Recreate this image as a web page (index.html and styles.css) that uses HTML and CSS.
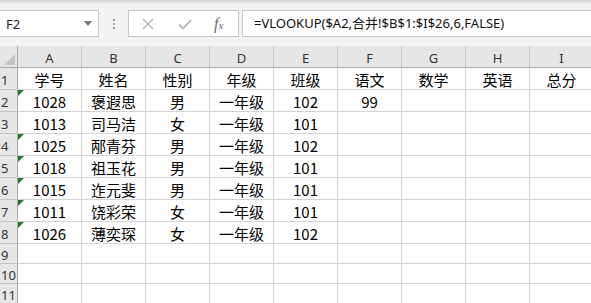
FILE: index.html
```html
<!DOCTYPE html>
<html>
	<head>
		<meta charset="utf-8">
		<title>VLOOKUP</title>
		<link rel="stylesheet" href="styles.css">
	</head>
	<body>
		<div id="bar">
			<div class="namebox">
				<span>F2</span>
				<i class="drop"></i>
			</div>
			<div class="grip"><b></b><b></b><b></b></div>
			<div class="btns">
				<svg class="ico" width="12" height="12" viewBox="0 0 12 12"><path d="M1 1L11 11M11 1L1 11" stroke="#b4b4b4" stroke-width="1.4" fill="none"/></svg>
				<svg class="ico" width="14" height="12" viewBox="0 0 14 12"><path d="M1 6.5L5 10.5L13 2" stroke="#b4b4b4" stroke-width="1.8" fill="none"/></svg>
				<span class="fx">f<small>x</small></span>
			</div>
			<div class="formula">=VLOOKUP($A2,合并!$B$1:$I$26,6,FALSE)</div>
		</div>

		<div id="sheet">
			<!-- 列标 -->
			<div class="corner"></div>
			<div class="ch">A</div><div class="ch">B</div><div class="ch">C</div><div class="ch">D</div><div class="ch">E</div><div class="ch">F</div><div class="ch">G</div><div class="ch">H</div><div class="ch">I</div>

			<div class="rh">1</div>
			<div class="c">学号</div><div class="c">姓名</div><div class="c">性别</div><div class="c">年级</div><div class="c">班级</div><div class="c">语文</div><div class="c">数学</div><div class="c">英语</div><div class="c">总分</div>

			<div class="rh">2</div>
			<div class="c tri">1028</div><div class="c">褒遐思</div><div class="c">男</div><div class="c">一年级</div><div class="c">102</div><div class="c">99</div><div class="c"></div><div class="c"></div><div class="c"></div>

			<div class="rh">3</div>
			<div class="c">1013</div><div class="c">司马洁</div><div class="c">女</div><div class="c">一年级</div><div class="c">101</div><div class="c"></div><div class="c"></div><div class="c"></div><div class="c"></div>

			<div class="rh">4</div>
			<div class="c tri">1025</div><div class="c">邴青芬</div><div class="c">男</div><div class="c">一年级</div><div class="c">102</div><div class="c"></div><div class="c"></div><div class="c"></div><div class="c"></div>

			<div class="rh">5</div>
			<div class="c tri">1018</div><div class="c">祖玉花</div><div class="c">男</div><div class="c">一年级</div><div class="c">101</div><div class="c"></div><div class="c"></div><div class="c"></div><div class="c"></div>

			<div class="rh">6</div>
			<div class="c tri">1015</div><div class="c">迮元斐</div><div class="c">男</div><div class="c">一年级</div><div class="c">101</div><div class="c"></div><div class="c"></div><div class="c"></div><div class="c"></div>

			<div class="rh">7</div>
			<div class="c tri">1011</div><div class="c">饶彩荣</div><div class="c">女</div><div class="c">一年级</div><div class="c">101</div><div class="c"></div><div class="c"></div><div class="c"></div><div class="c"></div>

			<div class="rh">8</div>
			<div class="c tri">1026</div><div class="c">薄奕琛</div><div class="c">女</div><div class="c">一年级</div><div class="c">102</div><div class="c"></div><div class="c"></div><div class="c"></div><div class="c"></div>

			<div class="rh">9</div>
			<div class="c"></div><div class="c"></div><div class="c"></div><div class="c"></div><div class="c"></div><div class="c"></div><div class="c"></div><div class="c"></div><div class="c"></div>

			<div class="rh">10</div>
			<div class="c"></div><div class="c"></div><div class="c"></div><div class="c"></div><div class="c"></div><div class="c"></div><div class="c"></div><div class="c"></div><div class="c"></div>

			<div class="rh">11</div>
			<div class="c"></div><div class="c"></div><div class="c"></div><div class="c"></div><div class="c"></div><div class="c"></div><div class="c"></div><div class="c"></div><div class="c"></div>
		</div>
	</body>
</html>
```

FILE: styles.css
```css
html,body{
	margin: 0;
	padding: 0;
}
body{
	width: 591px;
	height: 303px;
	overflow: hidden;
	background-color: #fff;
	font-family: "Noto Sans", "Noto Sans CJK SC", sans-serif;
}
#bar{
	height: 46px;
	box-sizing: border-box;
	padding-top: 10px;
	display: flex;
	align-items: flex-start;
	background: linear-gradient(#d6d6d6 0, #e6e6e6 3px, #f3f3f3 4px);
}
.namebox{
	width: 100px;
	height: 27px;
	box-sizing: border-box;
	margin-left: -1px;
	border: 1px solid #c8c8c8;
	background-color: #fff;
	display: flex;
	align-items: center;
	justify-content: space-between;
	padding: 0 6px 0 6px;
	font-size: 13px;
	color: #222;
}
.drop{
	width: 0;
	height: 0;
	border-left: 4px solid transparent;
	border-right: 4px solid transparent;
	border-top: 5px solid #7a7a7a;
}
.grip{
	width: 29px;
	height: 27px;
	display: flex;
	flex-direction: column;
	align-items: center;
	justify-content: center;
	gap: 2px;
}
.grip b{
	width: 2px;
	height: 2px;
	background-color: #a8a8a8;
}
.btns{
	width: 111px;
	height: 27px;
	box-sizing: border-box;
	border: 1px solid #c8c8c8;
	background-color: #fff;
	display: flex;
	align-items: center;
	padding-left: 13px;
}
.btns .ico:nth-child(1){
	margin-right: 24px;
}
.btns .ico:nth-child(2){
	margin-right: 22px;
}
.fx{
	font-family: "Liberation Serif", serif;
	font-style: italic;
	font-size: 16px;
	color: #6f6a6f;
	line-height: 1;
}
.fx small{
	font-size: 11px;
}
.formula{
	flex: 1;
	height: 27px;
	box-sizing: border-box;
	margin-left: 3px;
	margin-right: -1px;
	border: 1px solid #c8c8c8;
	background-color: #fff;
	padding-left: 11px;
	font-size: 13px;
	line-height: 24px;
	color: #111;
	white-space: nowrap;
}
#sheet{
	display: grid;
	grid-template-columns: 18px repeat(9, 64px);
	grid-template-rows: repeat(9, 22px) repeat(3, 20px);
}
#sheet > div{
	box-sizing: border-box;
	border-right: 1px solid #d4d4d4;
	border-bottom: 1px solid #d4d4d4;
	display: flex;
	align-items: center;
	justify-content: center;
}
#sheet .corner{
	position: relative;
	background-color: #e6e6e6;
	border-right-color: #a9a9a9;
	border-bottom-color: #a9a9a9;
}
.corner::after{
	content: "";
	position: absolute;
	right: 2px;
	bottom: 2px;
	border-left: 11px solid transparent;
	border-bottom: 11px solid #c4c4c4;
}
#sheet .ch{
	background-color: #e6e6e6;
	border-right-color: #c4c4c4;
	border-bottom-color: #a9a9a9;
	font-size: 13px;
	color: #333;
	padding-top: 2px;
}
#sheet .rh{
	background-color: #e6e6e6;
	border-right-color: #a9a9a9;
	border-bottom-color: #c4c4c4;
	font-size: 13px;
	color: #333;
	justify-content: flex-start;
	padding: 2px 0 0 1px;
}
#sheet .c{
	position: relative;
	font-family: "Noto Sans CJK SC", sans-serif;
	font-size: 15px;
	color: #000;
	padding-top: 1px;
}
.c.tri::before{
	content: "";
	position: absolute;
	left: 0;
	top: 0;
	border-top: 6px solid #1d7a2c;
	border-right: 6px solid transparent;
}
```
